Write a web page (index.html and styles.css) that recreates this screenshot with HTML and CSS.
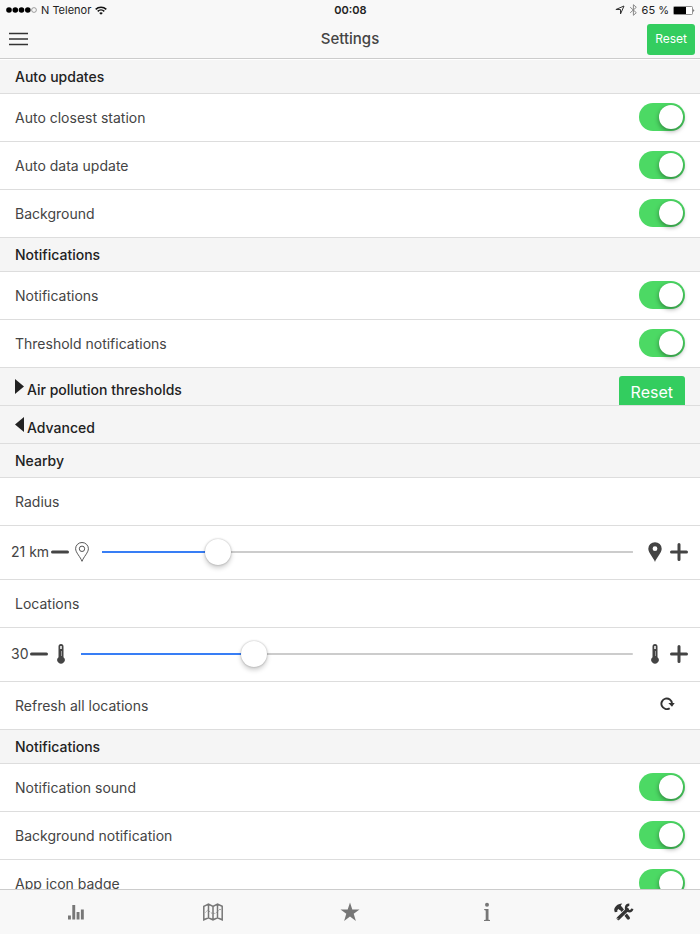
FILE: index.html
```html
<!DOCTYPE html>
<html lang="en">
<head>
  <meta charset="UTF-8">
  <meta name="viewport" content="width=device-width, initial-scale=1.0">
  <title>Settings</title>
  <link rel="stylesheet" href="styles.css">
</head>
<body>

  <!-- shared icons -->
  <svg width="0" height="0" class="sprite" aria-hidden="true">
    <symbol id="minus" viewBox="0 0 18 18">
      <path d="M1.5 9h15" stroke="#444" stroke-width="3" stroke-linecap="round"/>
    </symbol>
    <symbol id="plus" viewBox="0 0 18 18">
      <path d="M1.5 9h15M9 1.5v15" stroke="#444" stroke-width="3" stroke-linecap="round"/>
    </symbol>
    <symbol id="thermometer" viewBox="0 0 14 20">
      <path d="M7 0a2.500 2.500 0 0 0-2.500 2.500v10.700a3.700 3.700 0 1 0 5 0V2.500A2.500 2.500 0 0 0 7 0z" fill="#444"/>
      <path d="M7 2v3" stroke="#fff" stroke-width="1.500"/>
      <path d="M7.500 7v5" stroke="#999" stroke-width="1"/>
    </symbol>
  </svg>

  <header class="top">
    <div class="status-bar">
      <div class="status-left">
        <svg width="31" height="8" viewBox="0 0 31 8">
          <circle cx="3" cy="4" r="2.800"/>
          <circle cx="9.300" cy="4" r="2.800"/>
          <circle cx="15.500" cy="4" r="2.800"/>
          <circle cx="21.800" cy="4" r="2.800"/>
          <circle cx="28" cy="4" r="2.400" fill="none" stroke="#777" stroke-width=".7"/>
        </svg>
        <span>N Telenor</span>
        <svg width="12" height="9" viewBox="0 0 12 9" fill="none" stroke="#111" stroke-width="1.500">
          <path d="M.7 3.400a7.500 7.500 0 0 1 10.600 0M2.700 5.400a4.700 4.700 0 0 1 6.600 0"/>
          <path d="M6 8.800 4.200 7a2.600 2.600 0 0 1 3.600 0z" fill="#111" stroke="none"/>
        </svg>
      </div>
      <time class="clock">00:08</time>
      <div class="status-right">
        <svg width="10" height="10" viewBox="0 0 10 10" fill="none" stroke="#333" stroke-width="1">
          <path d="M9 1 .9 4.500h4.600V9z"/>
        </svg>
        <svg width="9" height="12" viewBox="0 0 9 12" fill="none" stroke="#888" stroke-width="1">
          <path d="M1.200 3.200 7.300 8.700 4.400 11.300V.7L7.300 3.300 1.200 8.800"/>
        </svg>
        <span>65 %</span>
        <svg width="22" height="9" viewBox="0 0 22 9">
          <rect x=".5" y=".5" width="19" height="8" rx="1" fill="#fff" stroke="#777" stroke-width=".8"/>
          <rect x="1" y="1" width="12" height="7"/>
          <path d="M20.500 3q1.500 1.500 0 3z"/>
        </svg>
      </div>
    </div>
    <div class="nav-bar">
      <button class="menu" aria-label="Menu">
        <svg width="19" height="14" viewBox="0 0 19 14">
          <path d="M0 1.500h19M0 7h19M0 12.500h19" stroke="#333" stroke-width="1.600"/>
        </svg>
      </button>
      <h1>Settings</h1>
      <button class="reset reset-small">Reset</button>
    </div>
  </header>

  <main class="content">
    <h2 class="divider">Auto updates</h2>
    <label class="item">Auto closest station<input type="checkbox" class="toggle" checked></label>
    <label class="item">Auto data update<input type="checkbox" class="toggle" checked></label>
    <label class="item">Background<input type="checkbox" class="toggle" checked></label>

    <h2 class="divider">Notifications</h2>
    <label class="item">Notifications<input type="checkbox" class="toggle" checked></label>
    <label class="item">Threshold notifications<input type="checkbox" class="toggle" checked></label>

    <div class="fold">
      <button class="fold-title"><span class="arrow arrow-right"></span>Air pollution thresholds</button>
      <button class="reset">Reset</button>
    </div>
    <div class="fold">
      <button class="fold-title"><span class="arrow arrow-left"></span>Advanced</button>
    </div>

    <h2 class="divider">Nearby</h2>
    <label class="item" for="radius">Radius</label>
    <div class="range-row">
      <output for="radius">21 km</output>
      <button class="step" aria-label="Decrease radius"><svg width="18" height="18"><use href="#minus"/></svg></button>
      <svg class="range-icon" width="14" height="20" viewBox="0 0 14 20" fill="none" stroke="#444" stroke-width=".9">
        <path d="M7 19.300C5.500 15 .6 10.500.6 6.700a6.400 6.200 0 0 1 12.800 0C13.400 10.500 8.500 15 7 19.300z"/>
        <circle cx="7" cy="6.800" r="2.700"/>
      </svg>
      <input type="range" id="radius" min="1" max="99" value="21" style="--fill: 22%">
      <svg class="range-icon" width="14" height="20" viewBox="0 0 14 20">
        <path fill="#444" fill-rule="evenodd" d="M7 20C5.500 15.500.3 10.800.3 6.700a6.700 6.500 0 0 1 13.400 0C13.700 10.800 8.500 15.500 7 20zM7 4.300a2.400 2.400 0 1 0 0 4.800 2.400 2.400 0 0 0 0-4.800z"/>
      </svg>
      <button class="step" aria-label="Increase radius"><svg width="18" height="18"><use href="#plus"/></svg></button>
    </div>

    <label class="item" for="locations">Locations</label>
    <div class="range-row">
      <output for="locations">30</output>
      <button class="step" aria-label="Fewer locations"><svg width="18" height="18"><use href="#minus"/></svg></button>
      <svg class="range-icon" width="14" height="20"><use href="#thermometer"/></svg>
      <input type="range" id="locations" min="0" max="99" value="30" style="--fill: 31%">
      <svg class="range-icon" width="14" height="20"><use href="#thermometer"/></svg>
      <button class="step" aria-label="More locations"><svg width="18" height="18"><use href="#plus"/></svg></button>
    </div>

    <button class="item refresh">Refresh all locations
      <svg width="15" height="13" viewBox="0 0 15 13">
        <path d="M9.700 11.200A5.300 5.300 0 1 1 12 6.500" fill="none" stroke="#333" stroke-width="1.900"/>
        <path d="M8.300 6h6.400L12 9.700z" fill="#333"/>
      </svg>
    </button>

    <h2 class="divider">Notifications</h2>
    <label class="item">Notification sound<input type="checkbox" class="toggle" checked></label>
    <label class="item">Background notification<input type="checkbox" class="toggle" checked></label>
    <label class="item">App icon badge<input type="checkbox" class="toggle" checked></label>
  </main>

  <nav class="tabs">
    <a href="#stats" aria-label="Statistics">
      <svg width="18" height="18" viewBox="0 0 18 18" fill="#777">
        <path d="M1 12.500h2.900v4H1zM5.300 2h2.900v14.500H5.300zM9.600 9h2.900v7.500H9.600zM13.900 6.500h2.900v10h-2.900z"/>
      </svg>
    </a>
    <a href="#map" aria-label="Map">
      <svg width="20" height="18" viewBox="0 0 20 18" fill="none" stroke="#777" stroke-width="1.500">
        <path d="M.8 3.300 5.500 1l4.500 2.300L14.500 1l4.700 2.300v13.500l-4.700-2.100-4.500 2.100-4.500-2.100-4.700 2.100zM5.500 1v13.700M10 3.300v13.500M14.500 1v13.700"/>
        <path d="M2.500 9.500 4.800 7l3.500 3 4 .500 4-3.500" stroke-width=".7" stroke-dasharray="1.500 1"/>
        <circle cx="17" cy="6.500" r=".3" stroke-width="1"/>
      </svg>
    </a>
    <a href="#favourites" aria-label="Favourites">
      <svg width="20" height="20" viewBox="0 0 20 20" fill="#777">
        <path d="M10 .5l2.300 7h7.200l-5.800 4.300 2.200 7.200L10 14.600 4.100 19l2.200-7.200L.5 7.500h7.200z"/>
      </svg>
    </a>
    <a href="#info" aria-label="Information">
      <svg width="6" height="20" viewBox="0 0 6 20" fill="#777">
        <circle cx="3" cy="2.700" r="2"/>
        <path d="M.2 7h4.300v10.700l1.500.4v.9H0v-.9l1.700-.4V8.400L.2 8z"/>
      </svg>
    </a>
    <a href="#settings" aria-label="Settings">
      <svg width="20" height="18" viewBox="0 0 20 18">
        <!-- hammer -->
        <path d="M.8 9.300.2 7C.5 4 3.200.9 8.200.6L6.800 2.400l1.500 2.400-2.200 2.400-1.800-1.100-1 1.200.1 1.500z" fill="#333"/>
        <path d="M7 5.500l7.300 9.500" stroke="#333" stroke-width="3.400" stroke-linecap="round"/>
        <!-- wrench -->
        <path d="M4.200 15.500 13 7" stroke="#f8f8f8" stroke-width="4.600"/>
        <path d="M4.200 15.500 13.500 6.500" stroke="#333" stroke-width="3.200" stroke-linecap="round"/>
        <path d="M15.300 1.800a3.200 3.200 0 1 0 3 4" fill="none" stroke="#333" stroke-width="2.400"/>
        <circle cx="3.800" cy="15.800" r=".6" fill="#f8f8f8"/>
      </svg>
    </a>
  </nav>

</body>
</html>
```
FILE: styles.css
```css
* {
  box-sizing: border-box;
}

body {
  margin: 0;
  height: 100vh;
  display: flex;
  flex-direction: column;
  overflow: hidden;
  background: #fff;
  color: #444;
  font-family: Inter, "Liberation Sans", sans-serif;
  font-size: 14px;
  line-height: 20px;
}

button {
  border: none;
  padding: 0;
  background: none;
  color: inherit;
  font: inherit;
  cursor: pointer;
}

svg {
  display: block;
  flex: none;
}

.sprite {
  position: absolute;
}

/* header */
.top {
  flex: none;
  background: #f8f8f8;
  border-bottom: 1px solid #ccc;
}

.status-bar {
  display: grid;
  grid-template-columns: 1fr auto 1fr;
  align-items: center;
  height: 20px;
  padding: 0 5px 0 6px;
  color: #222;
  font-size: 11px;
}

.status-left,
.status-right {
  display: flex;
  align-items: center;
  gap: 4px;
}

.status-right {
  justify-content: flex-end;
}

.clock {
  font-weight: 600;
}

.nav-bar {
  display: grid;
  grid-template-columns: 1fr auto 1fr;
  align-items: center;
  height: 38px;
  padding: 0 5px;
}

.menu {
  justify-self: start;
  margin-left: 4px;
}

h1 {
  margin: 0;
  font-size: 15px;
  font-weight: 500;
}

.reset {
  height: 31px;
  padding: 0 12px;
  border-radius: 3px;
  background: #33cd5f;
  color: #fff;
  font-size: 16px;
}

.reset-small {
  justify-self: end;
  padding: 0 8px;
  font-size: 12px;
}

/* list */
.content {
  flex: 1;
  min-height: 0;
  padding-top: 1px;
  overflow-y: auto;
  scrollbar-width: none;
}

.divider {
  display: flex;
  align-items: center;
  height: 34px;
  margin: 0;
  padding: 0 15px;
  border-bottom: 1px solid #ddd;
  background: #f5f5f5;
  color: #222;
  font-size: 14px;
  font-weight: 500;
}

.item {
  display: flex;
  align-items: center;
  justify-content: space-between;
  width: 100%;
  height: 48px;
  padding: 0 15px;
  border-bottom: 1px solid #ddd;
}

.toggle {
  appearance: none;
  width: 46px;
  height: 28px;
  margin: 0 0 2px;
  padding: 2px;
  border-radius: 14px;
  background: #e5e5e5;
  cursor: pointer;
}

.toggle::before {
  content: "";
  display: block;
  width: 24px;
  height: 24px;
  border-radius: 50%;
  background: #fff;
  box-shadow: 0 2px 5px rgba(0, 0, 0, 0.4);
}

.toggle:checked {
  background: #4cd964;
}

.toggle:checked::before {
  margin-left: auto;
}

.fold {
  display: flex;
  align-items: flex-start;
  justify-content: space-between;
  height: 38px;
  padding: 8px 15px 0;
  border-bottom: 1px solid #ddd;
  background: #f5f5f5;
  overflow: hidden;
}

.fold-title {
  display: flex;
  align-items: flex-start;
  gap: 3px;
  padding-top: 3px;
  color: #222;
  font-weight: 500;
  line-height: 22px;
}

.arrow {
  width: 9px;
  height: 15px;
  background: #222;
}

.arrow-right {
  clip-path: polygon(0 0, 100% 50%, 0 100%);
}

.arrow-left {
  clip-path: polygon(100% 0, 0 50%, 100% 100%);
}

/* sliders */
.range-row {
  display: flex;
  align-items: center;
  height: 54px;
  padding: 0 12px 2px 11px;
  border-bottom: 1px solid #ddd;
}

.step {
  margin-left: 2px;
}

.range-icon {
  margin: 0 6px;
}

.range-row input {
  --fill: 0%;
  appearance: none;
  flex: 1;
  min-width: 0;
  height: 28px;
  margin: 0 9px 0 7px;
  background: linear-gradient(to right, #387ef5 var(--fill), #ccc var(--fill)) center / 100% 2px no-repeat;
}

.range-row input::-webkit-slider-thumb {
  appearance: none;
  width: 26px;
  height: 26px;
  border-radius: 50%;
  background: #fff;
  box-shadow: 0 0 2px rgba(0, 0, 0, 0.3), 0 3px 5px rgba(0, 0, 0, 0.2);
}

.refresh {
  padding-right: 25px;
}

.refresh svg {
  margin-bottom: 4px;
}

/* bottom tabs */
.tabs {
  flex: none;
  display: flex;
  height: 45px;
  padding: 0 8px;
  border-top: 1px solid #ccc;
  background: #f8f8f8;
}

.tabs a {
  flex: 1;
  display: flex;
  align-items: center;
  justify-content: center;
}
```
